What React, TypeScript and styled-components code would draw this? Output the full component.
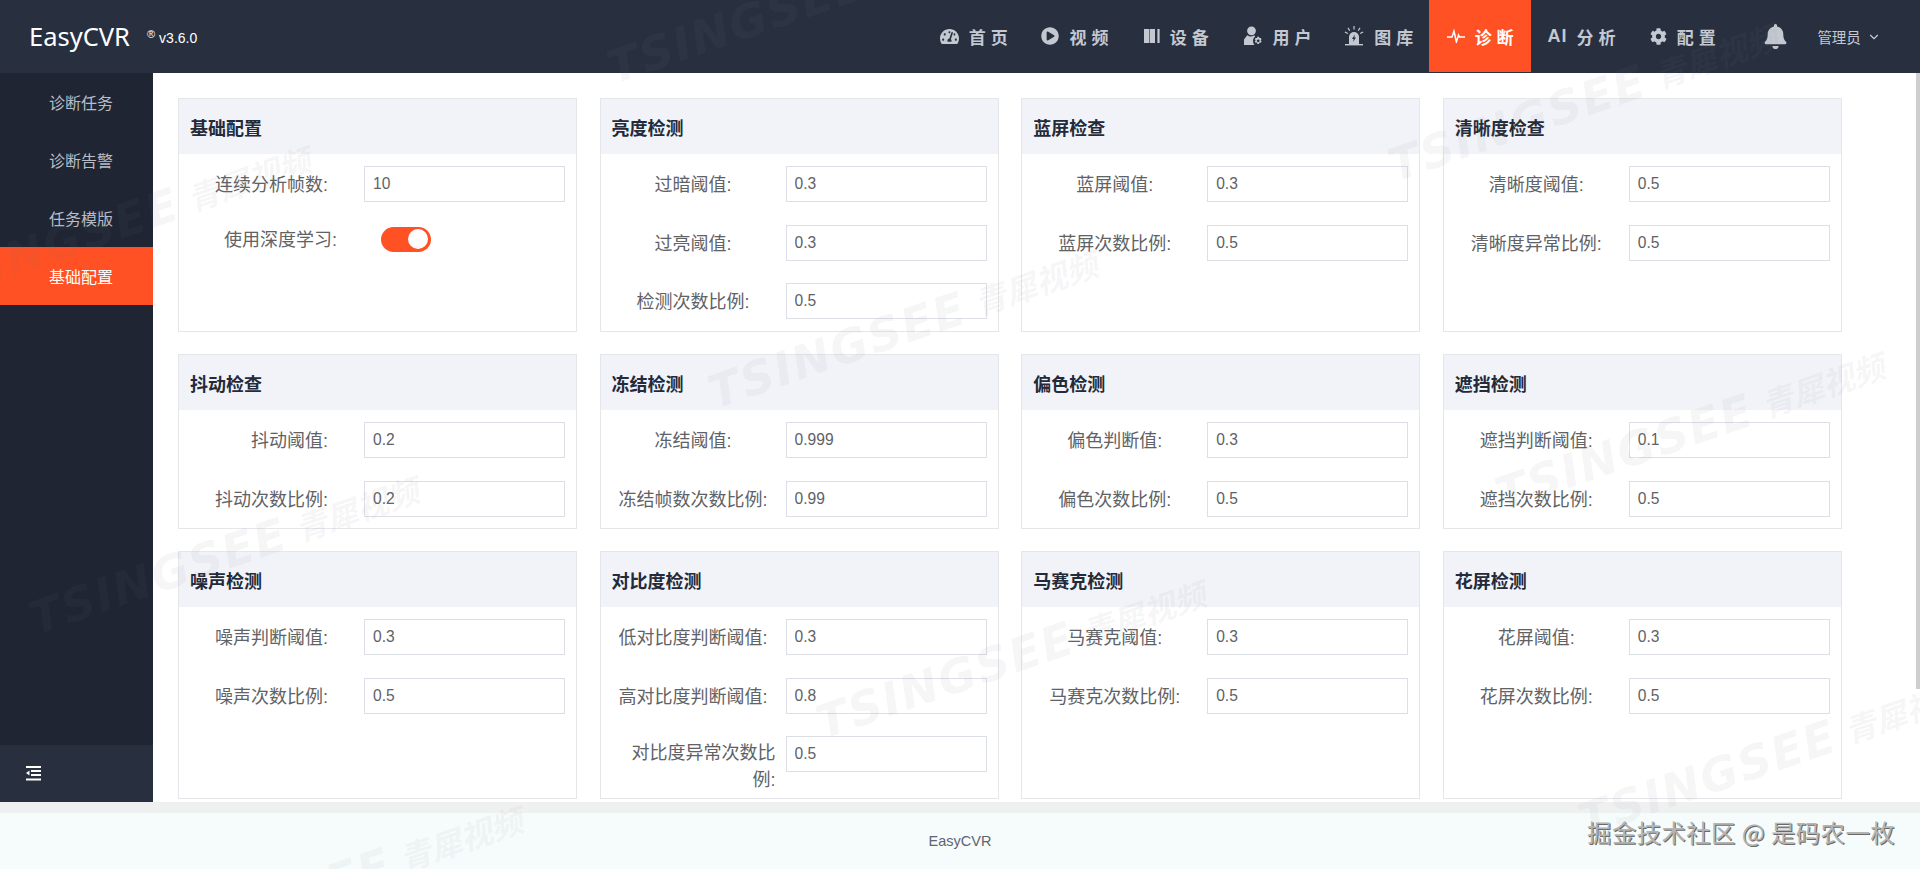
import React from 'react'
import styled, { createGlobalStyle } from 'styled-components'
import { FaBell, FaCog, FaPlayCircle, FaTachometerAlt } from 'react-icons/fa'
import { ChevronDown } from 'lucide-react'

const FONT = '"Liberation Sans", "Noto Sans CJK SC", sans-serif'

const GlobalStyle = createGlobalStyle`
  html, body { margin: 0; padding: 0; height: 100%; overflow: hidden; background: #fff; }
  * { box-sizing: border-box; }
  #root { height: 100%; }
`

const Page = styled.div`
  position: relative;
  width: 1920px;
  height: 869px;
  overflow: hidden;
  display: grid;
  grid-template-rows: 73px 729px 67px;
  font-family: ${FONT};
`

const Header = styled.header`
  display: flex;
  align-items: center;
  background: #283040;
`

const Logo = styled.div`
  display: flex;
  align-items: center;
  padding-left: 29px;
  color: #fff;
  font-family: "Noto Sans", "Open Sans", sans-serif;
  font-size: 25.5px;
  line-height: 1;
  width: 923px;
`

const Version = styled.span`
  display: flex;
  align-items: center;
  margin-left: 17px;
  font-family: ${FONT};
  font-size: 14px;
  margin-top: 3px;
  sup { font-size: 11px; margin-right: 4px; margin-top: -8px; }
`

const Nav = styled.nav`
  display: flex;
  height: 73px;
`

const NavItem = styled.a<{ $active?: boolean }>`
  display: flex;
  align-items: center;
  justify-content: center;
  gap: 10px;
  width: 101.3px;
  height: 72px;
  padding-left: 5px;
  color: ${p => (p.$active ? '#fff' : '#c3c8d1')};
  background: ${p => (p.$active ? '#ff5123' : 'transparent')};
  font-size: 17px;
  font-weight: 700;
  letter-spacing: 5px;
  white-space: nowrap;
  svg { flex: none; }
`

const AiText = styled.span`
  letter-spacing: 1px;
  margin-right: -1px;
  font-size: 18px;
`

const BellBox = styled.div`
  display: flex;
  justify-content: center;
  width: 84px;
  color: #c3c8d1;
`

const UserBox = styled.div`
  display: flex;
  align-items: center;
  gap: 6px;
  color: #c3c8d1;
  font-size: 14.5px;
`

const Body = styled.div`
  display: grid;
  grid-template-columns: 153px 1fr;
  min-height: 0;
`

const Sidebar = styled.aside`
  display: flex;
  flex-direction: column;
  background: #1f2533;
`

const SideItem = styled.div<{ $active?: boolean }>`
  height: 58px;
  display: flex;
  align-items: center;
  padding-left: 49px;
  font-size: 16px;
  color: ${p => (p.$active ? '#fff' : '#b9bdc5')};
  background: ${p => (p.$active ? '#ff5123' : 'transparent')};
`

const Collapse = styled.div`
  margin-top: auto;
  height: 57px;
  display: flex;
  align-items: center;
  padding-left: 26px;
  background: #283040;
  color: #fff;
`

const Main = styled.main`
  position: relative;
  padding: 25px 0 0 25px;
  background: #fff;
  overflow: hidden;
`

const ScrollThumb = styled.div`
  position: absolute;
  top: 0;
  right: 0;
  width: 4px;
  height: 616px;
  background: #cfcfcf;
`

const Grid = styled.div`
  display: grid;
  grid-template-columns: repeat(4, 399px);
  grid-template-rows: 234px 175px 248px;
  column-gap: 22.6px;
  row-gap: 22px;
`

const Card = styled.section`
  border: 1px solid #e4e6ea;
  background: #fff;
`

const CardTitle = styled.h3`
  margin: 0;
  height: 55px;
  display: flex;
  align-items: center;
  padding-left: 11px;
  background: #f1f3f8;
  color: #232a3a;
  font-size: 18px;
  font-weight: 700;
`

const CardBody = styled.div`
  display: flex;
  flex-direction: column;
  gap: 22.5px;
  padding-top: 12px;
`

const Row = styled.div<{ $tight?: boolean }>`
  display: flex;
  align-items: flex-start;
  min-height: 36px;
  margin-top: ${p => (p.$tight ? '-4px' : '0')};
`

const Label = styled.label<{ $align: 'right' | 'center' | 'wrap'; $inset?: number }>`
  flex: none;
  width: 185px;
  height: 36px;
  font-size: 18px;
  color: #606266;
  line-height: 38px;
  white-space: nowrap;
  text-align: ${p => (p.$align === 'center' ? 'center' : 'right')};
  padding-right: ${p => (p.$align === 'right' ? `${p.$inset ?? 36}px` : '0')};
  ${p =>
    p.$align === 'wrap' &&
    `
    height: auto;
    white-space: normal;
    line-height: 27px;
    padding: 4px 10px 0 28px;
  `}
`

const Input = styled.input`
  width: 201px;
  height: 36px;
  padding: 0 8px;
  border: 1px solid #dcdfe6;
  background: #fff;
  color: #606266;
  font-family: ${FONT};
  font-size: 15.6px;
  outline: none;
`

const Toggle = styled.span`
  display: flex;
  justify-content: flex-end;
  align-items: center;
  width: 50px;
  height: 25px;
  margin: 6px 0 0 17px;
  padding-right: 3px;
  border-radius: 13px;
  background: #ff5123;
  &::after {
    content: '';
    width: 20px;
    height: 20px;
    border-radius: 50%;
    background: #fff;
  }
`

const Footer = styled.footer`
  display: flex;
  align-items: center;
  justify-content: center;
  padding-top: 11px;
  background: linear-gradient(#eff1f1 0, #eff1f1 11px, #f6fbfb 11px);
  color: #5f6470;
  font-size: 14.5px;
`

const Signature = styled.div`
  position: absolute;
  right: 25px;
  bottom: 21px;
  color: #b4b4b4;
  font-family: "Noto Sans CJK SC", sans-serif;
  font-size: 24.4px;
  line-height: 32px;
  letter-spacing: 0.4px;
  text-shadow: 1px 1px 0 #6a6a6a;
`

const Watermark = styled.div<{ $x: number; $y: number }>`
  position: absolute;
  left: ${p => p.$x}px;
  top: ${p => p.$y}px;
  display: flex;
  align-items: center;
  gap: 10px;
  transform: rotate(-19deg);
  transform-origin: left center;
  color: rgba(120, 124, 140, 0.08);
  font-family: "DejaVu Sans", ${FONT};
  font-size: 46px;
  font-weight: 700;
  font-style: italic;
  letter-spacing: 2px;
  line-height: 46px;
  white-space: nowrap;
  pointer-events: none;
  span { font-family: "Noto Sans CJK SC", sans-serif; font-size: 32px; letter-spacing: 0; }
`

const DeviceIcon = () => (
  <svg width="16" height="18" viewBox="0 0 16 18" fill="currentColor">
    <rect x="0" y="2" width="5.4" height="14" />
    <rect x="6" y="2" width="5" height="14" />
    <rect x="13.4" y="2" width="2.2" height="14" />
  </svg>
)

const UserGearIcon = () => (
  <svg width="19" height="20" viewBox="0 0 19 20" fill="currentColor">
    <circle cx="7.5" cy="4.8" r="4.4" />
    <path d="M3.2 9.2 0 13.5V19h10.5a6 6 0 0 1 .6-8.6l-.9-1.2a5.8 5.8 0 0 1-7 0z" />
    <path d="M15 10.8l.5 1.3 1.3-.2.8 1.4-.9 1 .9 1.1-.8 1.4-1.3-.2-.5 1.3h-1.6l-.5-1.3-1.3.2-.8-1.4.9-1.1-.9-1 .8-1.4 1.3.2.5-1.3zm-.8 2.6a1.4 1.4 0 1 0 0 2.8 1.4 1.4 0 0 0 0-2.8z" fillRule="evenodd" />
  </svg>
)

const SirenIcon = () => (
  <svg width="20" height="20" viewBox="0 0 20 20" fill="currentColor">
    <path d="M5 18V11a5 5 0 0 1 10 0v7z" />
    <rect x="1" y="18" width="18" height="1.4" />
    <path d="M10.8 8.5 8 13h1.7l-.6 3 2.9-4.4h-1.7z" fill="#283040" />
    <path d="M9.4 0h1.2v3.4H9.4zM3.5 2.3l1-.7 1.8 2.8-1 .7zM16.5 2.3l-1-.7-1.8 2.8 1 .7zM.6 6.6l.5-1.1 3 1.4-.5 1.1zM19.4 6.6l-.5-1.1-3 1.4.5 1.1z" />
  </svg>
)

const PulseIcon = () => (
  <svg width="18" height="14" viewBox="0 0 18 14" fill="none" stroke="currentColor" strokeWidth="1.5">
    <path d="M0 8h5l2-6 2.4 11L11.5 6l1 2H18" />
  </svg>
)

const OutdentIcon = () => (
  <svg width="15" height="15" viewBox="0 0 15 15" fill="currentColor">
    <rect x="0" y="0" width="15" height="2" />
    <rect x="5" y="4" width="10" height="2" />
    <rect x="5" y="8" width="10" height="2" />
    <rect x="0" y="12.5" width="15" height="2" />
    <path d="M3.5 4.5v5L0 7z" />
  </svg>
)

const NAV = [
  { id: 'home', text: '首页', icon: <FaTachometerAlt size={19} /> },
  { id: 'video', text: '视频', icon: <FaPlayCircle size={18} /> },
  { id: 'device', text: '设备', icon: <DeviceIcon /> },
  { id: 'user', text: '用户', icon: <UserGearIcon /> },
  { id: 'gallery', text: '图库', icon: <SirenIcon /> },
  { id: 'diagnose', text: '诊断', icon: <PulseIcon />, active: true },
  { id: 'ai', text: '分析', icon: <AiText>AI</AiText> },
  { id: 'config', text: '配置', icon: <FaCog size={17} /> },
]

const SIDE = ['诊断任务', '诊断告警', '任务模版', '基础配置']

type Field = { label: string; value?: string; toggle?: boolean; wrap?: boolean; inset?: number }

const CARDS: { title: string; align: 'right' | 'center'; fields: Field[] }[] = [
  {
    title: '基础配置',
    align: 'right',
    fields: [
      { label: '连续分析帧数:', value: '10' },
      { label: '使用深度学习:', toggle: true, inset: 27 },
    ],
  },
  {
    title: '亮度检测',
    align: 'center',
    fields: [
      { label: '过暗阈值:', value: '0.3' },
      { label: '过亮阈值:', value: '0.3' },
      { label: '检测次数比例:', value: '0.5' },
    ],
  },
  {
    title: '蓝屏检查',
    align: 'center',
    fields: [
      { label: '蓝屏阈值:', value: '0.3' },
      { label: '蓝屏次数比例:', value: '0.5' },
    ],
  },
  {
    title: '清晰度检查',
    align: 'center',
    fields: [
      { label: '清晰度阈值:', value: '0.5' },
      { label: '清晰度异常比例:', value: '0.5' },
    ],
  },
  {
    title: '抖动检查',
    align: 'right',
    fields: [
      { label: '抖动阈值:', value: '0.2' },
      { label: '抖动次数比例:', value: '0.2' },
    ],
  },
  {
    title: '冻结检测',
    align: 'center',
    fields: [
      { label: '冻结阈值:', value: '0.999' },
      { label: '冻结帧数次数比例:', value: '0.99' },
    ],
  },
  {
    title: '偏色检测',
    align: 'center',
    fields: [
      { label: '偏色判断值:', value: '0.3' },
      { label: '偏色次数比例:', value: '0.5' },
    ],
  },
  {
    title: '遮挡检测',
    align: 'center',
    fields: [
      { label: '遮挡判断阈值:', value: '0.1' },
      { label: '遮挡次数比例:', value: '0.5' },
    ],
  },
  {
    title: '噪声检测',
    align: 'right',
    fields: [
      { label: '噪声判断阈值:', value: '0.3' },
      { label: '噪声次数比例:', value: '0.5' },
    ],
  },
  {
    title: '对比度检测',
    align: 'center',
    fields: [
      { label: '低对比度判断阈值:', value: '0.3' },
      { label: '高对比度判断阈值:', value: '0.8' },
      { label: '对比度异常次数比例:', value: '0.5', wrap: true },
    ],
  },
  {
    title: '马赛克检测',
    align: 'center',
    fields: [
      { label: '马赛克阈值:', value: '0.3' },
      { label: '马赛克次数比例:', value: '0.5' },
    ],
  },
  {
    title: '花屏检测',
    align: 'center',
    fields: [
      { label: '花屏阈值:', value: '0.3' },
      { label: '花屏次数比例:', value: '0.5' },
    ],
  },
]

const MARKS = [
  [609, 46],
  [1390, 144],
  [-77, 267],
  [710, 371],
  [1497, 473],
  [31, 597],
  [818, 701],
  [1580, 799],
  [135, 927],
]

export default function App() {
  return (
    <Page>
      <GlobalStyle />
      <Header>
        <Logo>
          EasyCVR
          <Version>
            <sup>®</sup>v3.6.0
          </Version>
        </Logo>
        <Nav>
          {NAV.map(item => (
            <NavItem key={item.id} $active={item.active}>
              {item.icon}
              {item.text}
            </NavItem>
          ))}
        </Nav>
        <BellBox>
          <FaBell size={25} />
        </BellBox>
        <UserBox>
          管理员
          <ChevronDown size={14} />
        </UserBox>
      </Header>
      <Body>
        <Sidebar>
          {SIDE.map((name, i) => (
            <SideItem key={name} $active={i === 3}>
              {name}
            </SideItem>
          ))}
          <Collapse>
            <OutdentIcon />
          </Collapse>
        </Sidebar>
        <Main>
          <Grid>
            {CARDS.map(card => (
              <Card key={card.title}>
                <CardTitle>{card.title}</CardTitle>
                <CardBody>
                  {card.fields.map(f => (
                    <Row key={f.label} $tight={f.toggle}>
                      <Label $align={f.wrap ? 'wrap' : card.align} $inset={f.inset}>
                        {f.label}
                      </Label>
                      {f.toggle ? <Toggle /> : <Input readOnly defaultValue={f.value} />}
                    </Row>
                  ))}
                </CardBody>
              </Card>
            ))}
          </Grid>
          <ScrollThumb />
        </Main>
      </Body>
      <Footer>EasyCVR</Footer>
      <Signature>掘金技术社区 @ 是码农一枚</Signature>
      {MARKS.map(([x, y]) => (
        <Watermark key={`${x}-${y}`} $x={x} $y={y}>
          TSINGSEE<span>青犀视频</span>
        </Watermark>
      ))}
    </Page>
  )
}
